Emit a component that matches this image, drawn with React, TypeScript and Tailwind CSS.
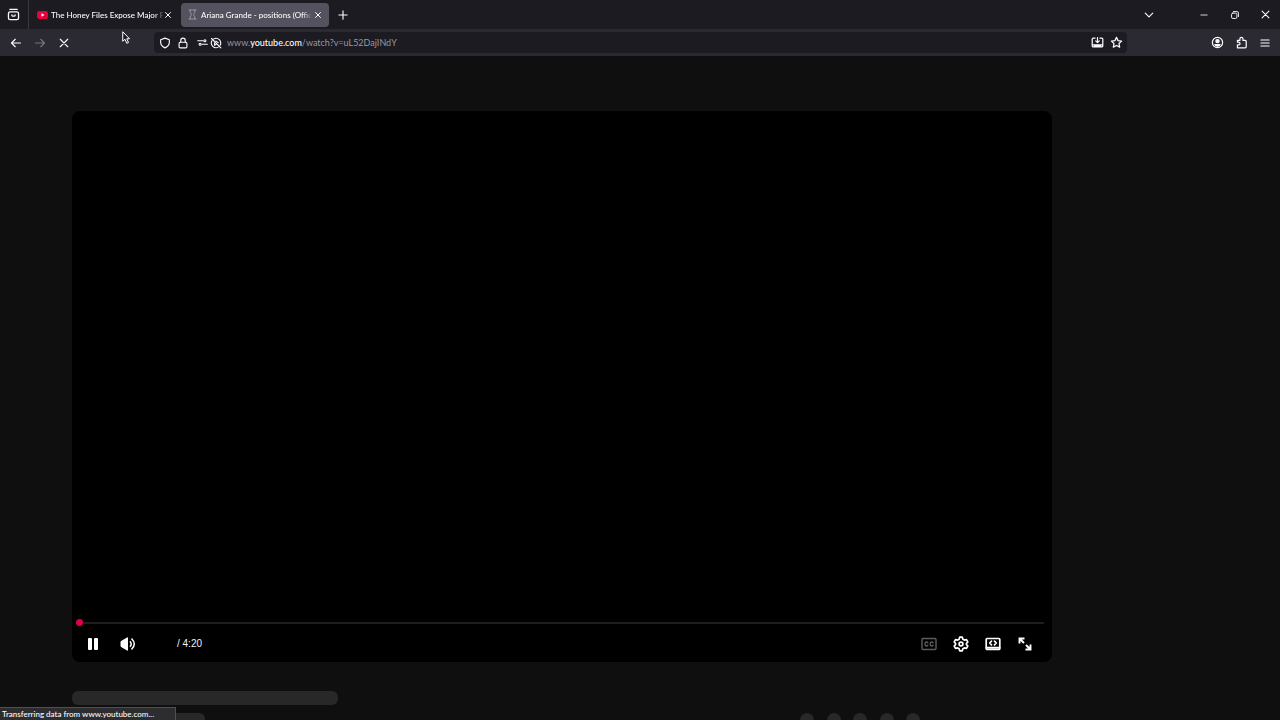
import { type ReactNode } from "react";

interface IIconButton {
  label: string;
  className?: string;
  children: ReactNode;
}

const IconButton: React.FC<IIconButton> = ({ label, className = "w-6", children }) => {
  return (
    <button
      type="button"
      aria-label={label}
      className={`flex h-6 shrink-0 items-center justify-center ${className}`}
    >
      {children}
    </button>
  );
};

interface IIcon {
  size?: number;
  stroke?: number;
  children: ReactNode;
}

// All icons share a 16 unit grid
const Icon: React.FC<IIcon> = ({ size = 12, stroke = 1.5, children }) => (
  <svg
    width={size}
    height={size}
    viewBox="0 0 16 16"
    fill="none"
    stroke="currentColor"
    strokeWidth={stroke}
    strokeLinecap="round"
    strokeLinejoin="round"
    className="shrink-0"
    aria-hidden="true"
  >
    {children}
  </svg>
);

const CloseIcon = ({ size = 12, stroke = 1.5 }: { size?: number; stroke?: number }) => (
  <Icon size={size} stroke={stroke}>
    <path d="M3 3l10 10M13 3L3 13" />
  </Icon>
);

interface ITab {
  title: string;
  icon: ReactNode;
  active?: boolean;
}

const Tab: React.FC<ITab> = ({ title, icon, active = false }) => {
  return (
    <div
      className={`flex h-6 w-[148px] shrink-0 items-center rounded pl-[6px] pr-1 ${
        active ? "bg-[#53525e]" : ""
      }`}
    >
      <button type="button" role="tab" aria-selected={active} className="flex min-w-0 flex-1 items-center gap-[3px]">
        {icon}
        <span className="flex-1 whitespace-nowrap text-left text-[8px] font-medium leading-3 [mask-image:linear-gradient(to_right,black_92%,transparent)]">
          {title}
        </span>
      </button>
      <button type="button" aria-label={`Close ${title}`} className="flex h-4 w-[14px] items-center justify-center">
        <CloseIcon size={8} stroke={2} />
      </button>
    </div>
  );
};

const TabBar = () => (
  <header className="flex h-[29px] items-center bg-[#1c1b22]">
    <IconButton label="Firefox View" className="w-[28px] pr-[2px]">
      <Icon size={13} stroke={1.6}>
        <path d="M3.500 1.800h9" />
        <rect x="1.8" y="4.8" width="12.4" height="9.4" rx="2" />
        <path d="M6 8.600v.4q0 1 1 1h2q1 0 1-1v-.4" />
      </Icon>
    </IconButton>
    <div role="tablist" className="flex h-full items-center gap-[2px] border-l border-[#38373f] pl-[2px]">
      <Tab
        title="The Honey Files Expose Major F"
        icon={
          <svg width="11" height="8" viewBox="0 0 22 16" className="shrink-0" aria-hidden="true">
            <rect width="22" height="16" rx="4" fill="#e8003a" />
            <path d="M9 4.5v7l6-3.5z" fill="#fff" />
          </svg>
        }
      />
      <Tab
        active
        title="Ariana Grande - positions (Offic"
        icon={
          <span className="flex w-[11px] justify-center text-[#a5a4ad]">
            <Icon size={11} stroke={1.2}>
              <path d="M3 1.5h10M3 14.5h10M4.5 1.5V4c0 2 2 2.500 2 4s-2 2-2 4v2.500M11.500 1.500V4c0 2-2 2.500-2 4s2 2 2 4v2.500" />
            </Icon>
          </span>
        }
      />
    </div>
    <IconButton label="New tab" className="w-[28px]">
      <Icon>
        <path d="M8 2.500v11M2.500 8h11" />
      </Icon>
    </IconButton>
    <div className="flex-1" />
    <IconButton label="List all tabs" className="mr-6 w-[30px]">
      <Icon>
        <path d="M3 5.500l5 5 5-5" />
      </Icon>
    </IconButton>
    <IconButton label="Minimize" className="w-[31px]">
      <Icon size={10} stroke={1.300}>
        <path d="M3 8h10" />
      </Icon>
    </IconButton>
    <IconButton label="Restore" className="w-[31px]">
      <Icon size={10}>
        <rect x="2.500" y="5" width="8.500" height="8.500" rx="2" />
        <path d="M5.500 2.500h5.500a2.500 2.500 0 0 1 2.500 2.500v5.500" />
      </Icon>
    </IconButton>
    <IconButton label="Close window" className="w-[30px]">
      <CloseIcon size={11} />
    </IconButton>
  </header>
);

const UrlBar = () => (
  <div className="mx-[78px] flex h-[21px] flex-1 items-center rounded bg-[#1c1b22] pl-[2px]">
    <IconButton label="Tracking protection" className="w-[18px]">
      <Icon>
        <path d="M8 1.500l5.800 2.200v3.300c0 3.500-2.500 6-5.800 7.500-3.300-1.500-5.800-4-5.800-7.500V3.700z" />
      </Icon>
    </IconButton>
    <IconButton label="Site security" className="w-[18px]">
      <Icon>
        <rect x="2.800" y="7" width="10.400" height="7.500" rx="1.500" />
        <path d="M5 7V4.500a3 3 0 0 1 6 0V7" />
      </Icon>
    </IconButton>
    <IconButton label="Permissions" className="w-[18px] pl-[2px]">
      <Icon size={11}>
        <path d="M1 5.500h8M7 10.500h8" />
        <circle cx="11.500" cy="5.500" r="1.500" />
        <circle cx="4.500" cy="10.500" r="1.500" />
      </Icon>
    </IconButton>
    <IconButton label="Autoplay blocked" className="w-[12px]">
      <Icon>
        <path d="M5 2.500a6.300 6.300 0 0 1 8.500 8.500M11 13.500A6.300 6.300 0 0 1 2.500 5M2 2l12.500 12.500M8 5.500l3 2M6 8v3l2-1" />
      </Icon>
    </IconButton>
    <div className="relative ml-[5px] min-w-0 flex-1 text-[9px] leading-3 text-[#98979f]">
      <div aria-hidden="true" className="whitespace-nowrap">
        www.<span className="font-medium text-[#fbfbfe]">youtube.com</span>/watch?v=uL52DajINdY
      </div>
      <input
        type="text"
        aria-label="Address"
        defaultValue="www.youtube.com/watch?v=uL52DajINdY"
        className="absolute inset-0 w-full bg-transparent text-transparent outline-none"
      />
    </div>
    <IconButton label="Install" className="w-[19px]">
      <Icon size={13}>
        <path d="M5 2.500H2.700c-.7 0-1.200.5-1.200 1.200v8.600c0 .7.500 1.200 1.200 1.200h10.600c.7 0 1.200-.5 1.200-1.200V3.700c0-.7-.5-1.200-1.200-1.200H11M8 2v6M5.800 6L8 8.200 10.200 6M1.500 10.800h13M4 12.500h8" />
      </Icon>
    </IconButton>
    <IconButton label="Bookmark" className="mr-[2px] w-[18px]">
      <Icon size={13}>
        <path d="M8 1.700l1.900 4 4.400.6-3.200 3 .8 4.400L8 11.600l-3.900 2.100.8-4.400-3.200-3 4.400-.6z" />
      </Icon>
    </IconButton>
  </div>
);

const Toolbar = () => (
  <nav className="flex h-[27px] items-center bg-[#2b2a33] pl-1 pr-[3px]">
    <IconButton label="Back">
      <Icon>
        <path d="M14 8H2.500M7 3L2 8l5 5" />
      </Icon>
    </IconButton>
    <IconButton label="Forward" className="w-6 text-[#77767e]">
      <Icon>
        <path d="M2 8h11.500M9 3l5 5-5 5" />
      </Icon>
    </IconButton>
    <IconButton label="Stop">
      <CloseIcon />
    </IconButton>
    <UrlBar />
    <IconButton label="Account">
      <Icon size={13}>
        <circle cx="8" cy="8" r="6.300" />
        <circle cx="8" cy="6.300" r="2" fill="currentColor" />
        <path d="M4.800 10.500h6.400c-.8 1.600-1.900 2-3.200 2s-2.400-.4-3.200-2z" fill="currentColor" />
      </Icon>
    </IconButton>
    <IconButton label="Extensions">
      <Icon size={13}>
        <path d="M3 5.500h3V3.700a1.900 1.900 0 0 1 3.800 0v1.800h2.700c.8 0 1.300.5 1.300 1.300v6.400c0 .8-.5 1.300-1.300 1.300H3V11h1.500a1.700 1.700 0 0 0 0-3.400H3z" />
      </Icon>
    </IconButton>
    <IconButton label="Application menu">
      <Icon>
        <path d="M2.500 4h11M2.500 8h11M2.500 12h11" />
      </Icon>
    </IconButton>
  </nav>
);

const Player = () => (
  <section aria-label="Video player" className="flex aspect-video flex-col justify-end rounded-lg bg-black">
    <input
      type="range"
      aria-label="Seek"
      min={0}
      max={260}
      defaultValue={0}
      className="mx-1 mr-2 block h-[7px] appearance-none bg-transparent [&::-webkit-slider-runnable-track]:h-[2px] [&::-webkit-slider-runnable-track]:bg-[#1f1d1d] [&::-webkit-slider-thumb]:-mt-[3px] [&::-webkit-slider-thumb]:size-[7px] [&::-webkit-slider-thumb]:appearance-none [&::-webkit-slider-thumb]:rounded-full [&::-webkit-slider-thumb]:bg-[#e0003f]"
    />
    <div className="flex h-9 items-center pb-px pl-1 pr-[11px] text-white">
      <IconButton label="Pause" className="w-[34px]">
        <svg width="12" height="12" viewBox="0 0 12 12" fill="currentColor" aria-hidden="true">
          <rect x="1" width="4" height="12" rx="1" />
          <rect x="7" width="4" height="12" rx="1" />
        </svg>
      </IconButton>
      <IconButton label="Mute" className="w-9">
        <svg width="16" height="14" viewBox="0 0 16 14" aria-hidden="true">
          <path d="M0.500 5.200Q.5 4.200 1.500 3.800L7 .5Q8 0 8 1v12q0 1-1 .5L1.500 10.200Q.5 9.800.5 8.800z" fill="currentColor" />
          <path d="M10 4.200q2.400 2.800 0 5.600M11.500 1.500q5.500 5.500 0 11" fill="none" stroke="currentColor" strokeWidth="1.500" />
        </svg>
      </IconButton>
      <span className="ml-[31px] font-['Liberation_Sans',sans-serif] text-[10px] leading-3 text-[#f1f1f1]">/ 4:20</span>
      <div className="flex-1" />
      <IconButton label="Subtitles" className="w-8 text-[#5c5c5c]">
        <Icon size={16} stroke={1.400}>
          <rect x="1" y="2.500" width="14" height="11" rx="1" />
          <path d="M6.800 6.800Q6.500 6 5.300 6 4 6 4 8t1.300 2q1.200 0 1.500-.8M12 6.800q-.3-.8-1.500-.8-1.300 0-1.300 2t1.300 2q1.200 0 1.500-.8" />
        </Icon>
      </IconButton>
      <IconButton label="Settings" className="w-8">
        <Icon size={16} stroke={1.700}>
          <path d="M6.700 1.200h2.600l.6 2 1.500.9 2.100-.5 1.300 2.300L13.400 7.500v1l1.400 1.600-1.300 2.300-2.100-.5-1.500.9-.6 2H6.700l-.6-2-1.500-.9-2.100.5-1.300-2.300 1.400-1.600v-1L1.200 5.900l1.300-2.300 2.100.5 1.500-.9z" />
          <circle cx="8" cy="8" r="1.900" />
        </Icon>
      </IconButton>
      <IconButton label="Theater mode" className="w-8">
        <Icon size={16} stroke={1.700}>
          <rect x="1.200" y="2.500" width="13.600" height="11" rx="1" />
          <path d="M1.500 11.800h13" strokeWidth="2" />
          <path d="M6.500 5.200L4.700 7l1.800 1.800M9.500 5.200L11.300 7 9.500 8.800" />
        </Icon>
      </IconButton>
      <IconButton label="Full screen" className="w-8">
        <Icon size={16} stroke={1.900}>
          <path d="M2.500 7.500v-5h5M2.500 2.500L7 7M13.500 8.500v5h-5M13.500 13.500L9 9" strokeLinecap="butt" strokeLinejoin="miter" />
        </Icon>
      </IconButton>
    </div>
  </section>
);

const actionKeys = ["like", "share", "download", "clip", "more"];

const App: React.FC = () => {
  return (
    <div className="flex h-screen flex-col overflow-hidden bg-[#0f0f0f] font-['Lato','Noto_Sans',sans-serif] text-[#fbfbfe]">
      <TabBar />
      <Toolbar />
      <main className="min-h-0 flex-1 overflow-hidden pl-[72px] pr-[228px] pt-[55px]">
        <Player />
        {/* Placeholders shown until the title and actions have loaded */}
        <div className="mt-[29px] h-[14px] w-[266px] rounded-md bg-[#282828]" />
        <div className="mt-2 flex items-start justify-between pr-[132px]">
          <div className="h-[14px] w-[133px] rounded-md bg-[#282828]" />
          <div className="flex w-[120px] justify-between">
            {actionKeys.map((key) => (
              <div key={key} className="size-[14px] rounded-full bg-[#282828]" />
            ))}
          </div>
        </div>
      </main>
      <div role="status" className="fixed bottom-0 left-0 h-[13px] w-[176px] border-r border-t border-[#505053] bg-[#2d2d30] pl-[2px] text-[8px] font-medium leading-3">
        Transferring data from www.youtube.com...
      </div>
      <svg width="8" height="13" viewBox="0 0 16 26" className="pointer-events-none absolute left-[122px] top-[31px]" aria-hidden="true">
        <path d="M1.500 1.500v19l4.500-4 3.500 8 3.500-1.500-3.500-7.500h5.500z" fill="#1c1b22" stroke="#fff" strokeWidth="2" />
      </svg>
    </div>
  );
};

export default App;
